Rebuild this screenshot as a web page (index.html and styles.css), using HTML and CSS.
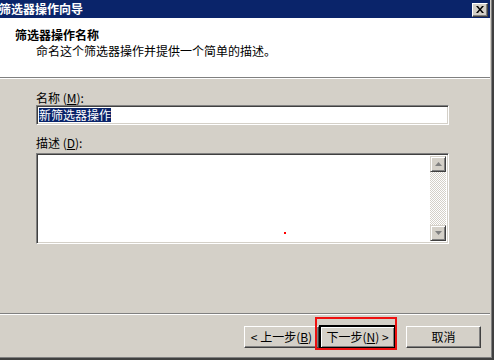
FILE: index.html
```html
<!DOCTYPE html>
<html>
<head>
<meta charset="utf-8">
<link rel="stylesheet" href="styles.css">
</head>
<body>
<div class="frame">
  <div class="window">
    <div class="titlebar">
      <span class="title">筛选器操作向导</span>
      <span class="close">
        <svg width="8" height="7" viewBox="0 0 8 7"><path d="M0 0h2l2 2.5L6 0h2L5 3.5 8 7H6L4 4.5 2 7H0l3-3.5z" fill="#000"/></svg>
      </span>
    </div>
    <div class="header">
      <div class="h-title">筛选器操作名称</div>
      <div class="h-sub">命名这个筛选器操作并提供一个简单的描述。</div>
    </div>
    <div class="sep"></div>
    <div class="main">
      <div class="label">名称 (<u>M</u>):</div>
      <div class="input"><span class="sel">新筛选器操作</span></div>
      <div class="label label2">描述 (<u>D</u>):</div>
      <div class="textarea">
        <div class="ta-body"><span class="dot"></span></div>
        <div class="scroll">
          <div class="sbtn"><svg width="7" height="4" viewBox="0 0 7 4"><path d="M3.5 0L7 4H0z" fill="#808080"/></svg></div>
          <div class="track"></div>
          <div class="sbtn"><svg width="7" height="4" viewBox="0 0 7 4"><path d="M0 0h7L3.5 4z" fill="#808080"/></svg></div>
        </div>
      </div>
    </div>
    <div class="sep sep2"></div>
    <div class="buttons">
      <div class="btn">&lt; 上一步(<u>B</u>)</div>
      <div class="btn btn-default">下一步(<u>N</u>) &gt;<span class="redbox"></span></div>
      <div class="btn btn-cancel">取消</div>
    </div>
  </div>
</div>
</body>
</html>
```
FILE: styles.css
```css
html, body {
  margin: 0;
  padding: 0;
  background: #d4d0c8;
}
body {
  font-family: "Noto Sans CJK SC", "Liberation Sans", sans-serif;
  font-size: 12px;
  color: #000;
}
.frame {
  width: 494px;
  height: 360px;
  box-sizing: border-box;
  border-right: 2px solid #404040;
  border-bottom: 2px solid #404040;
  overflow: hidden;
}
.window {
  width: 492px;
  height: 358px;
  box-sizing: border-box;
  border-right: 1px solid #808080;
  border-bottom: 1px solid #808080;
  padding-right: 1px;
  display: flex;
  flex-direction: column;
  overflow: hidden;
}
.titlebar {
  height: 18px;
  background: #0a246a;
  display: flex;
  align-items: center;
  justify-content: space-between;
  flex: none;
}
.title {
  color: #fff;
  font-weight: bold;
  font-size: 12px;
  line-height: 14px;
  margin-left: -1px;
}
.close {
  width: 16px;
  height: 14px;
  box-sizing: border-box;
  background: #d4d0c8;
  border-top: 1px solid #fff;
  border-left: 1px solid #fff;
  border-right: 1px solid #404040;
  border-bottom: 1px solid #404040;
  box-shadow: inset -1px -1px 0 #808080;
  display: flex;
  align-items: center;
  justify-content: center;
  margin-right: 2px;
  margin-top: 1px;
}
.header {
  height: 59px;
  background: #fff;
  box-sizing: border-box;
  padding-top: 9px;
  flex: none;
}
.h-title {
  font-weight: bold;
  line-height: 16px;
  padding-left: 15px;
}
.h-sub {
  line-height: 16px;
  padding-left: 36px;
}
.sep {
  height: 1px;
  background: #808080;
  border-bottom: 1px solid #fff;
  flex: none;
}
.main {
  height: 234px;
  padding-left: 36px;
  padding-top: 12px;
  box-sizing: border-box;
  flex: none;
}
.label {
  line-height: 14px;
  height: 14px;
}
.label2 {
  margin-top: 11px;
}
.input {
  width: 413px;
  height: 20px;
  box-sizing: border-box;
  background: #fff;
  border-top: 1px solid #808080;
  border-left: 1px solid #808080;
  border-right: 1px solid #fff;
  border-bottom: 1px solid #fff;
  box-shadow: inset 1px 1px 0 #404040, inset -1px -1px 0 #d4d0c8;
  padding: 2px 0 0 2px;
  line-height: 14px;
}
.sel {
  background: #0a246a;
  color: #fff;
  display: inline-block;
  line-height: 14px;
}
.textarea {
  width: 413px;
  height: 91px;
  margin-top: 3px;
  box-sizing: border-box;
  background: #fff;
  border-top: 1px solid #808080;
  border-left: 1px solid #808080;
  border-right: 1px solid #fff;
  border-bottom: 1px solid #fff;
  box-shadow: inset 1px 1px 0 #404040, inset -1px -1px 0 #d4d0c8;
  padding: 2px;
  display: flex;
}
.ta-body {
  flex: 1;
  position: relative;
}
.dot {
  position: absolute;
  left: 245px;
  top: 76px;
  width: 2px;
  height: 2px;
  background: #f00;
}
.scroll {
  width: 16px;
  display: flex;
  flex-direction: column;
}
.sbtn {
  width: 16px;
  height: 16px;
  box-sizing: border-box;
  background: #d4d0c8;
  border-top: 1px solid #d4d0c8;
  border-left: 1px solid #d4d0c8;
  border-right: 1px solid #404040;
  border-bottom: 1px solid #404040;
  box-shadow: inset 1px 1px 0 #fff, inset -1px -1px 0 #808080;
  display: flex;
  align-items: center;
  justify-content: center;
  flex: none;
}
.track {
  flex: 1;
  background: repeating-conic-gradient(#fff 0 25%, #d4d0c8 0 50%) 0 0 / 2px 2px;
}
.buttons {
  display: flex;
  justify-content: flex-end;
  padding-top: 11px;
  padding-right: 9px;
}
.btn {
  width: 75px;
  height: 22px;
  box-sizing: border-box;
  background: #d4d0c8;
  border-top: 1px solid #fff;
  border-left: 1px solid #fff;
  border-right: 1px solid #404040;
  border-bottom: 1px solid #404040;
  box-shadow: inset -1px -1px 0 #808080;
  display: flex;
  align-items: center;
  justify-content: center;
  line-height: 14px;
  position: relative;
}
.btn-default {
  outline: 1px solid #000;
  border: 1px solid #000;
  box-shadow: inset 1px 1px 0 #fff, inset -1px -1px 0 #808080;
  margin-left: 1px;
}
.btn-cancel {
  margin-left: 11px;
}
.redbox {
  position: absolute;
  left: -6px;
  top: -10px;
  right: -3px;
  bottom: -3px;
  border: 2px solid #ee1010;
}
```
